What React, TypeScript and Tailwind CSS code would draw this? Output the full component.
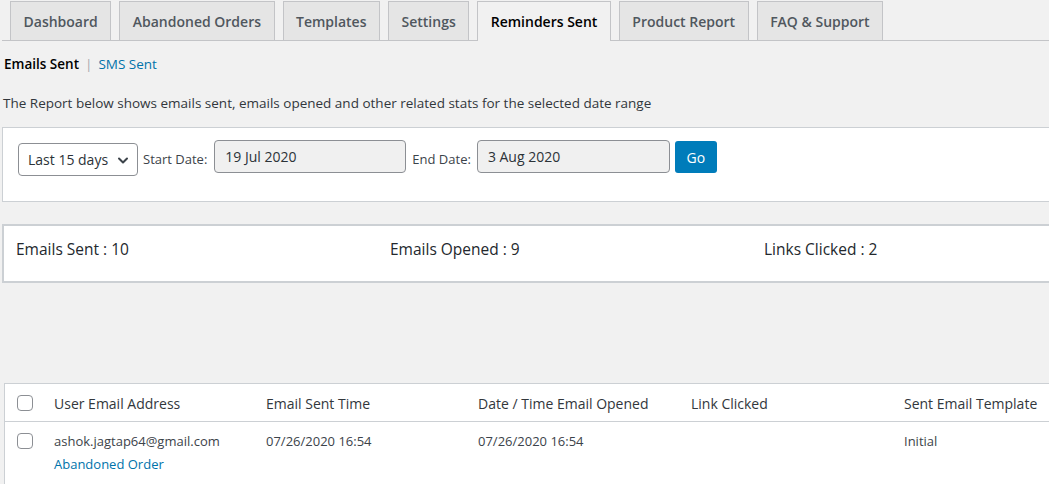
import type { ReactNode } from "react"

const tabs = [
  "Dashboard",
  "Abandoned Orders",
  "Templates",
  "Settings",
  "Reminders Sent",
  "Product Report",
  "FAQ & Support",
]

const columns = [
  "User Email Address",
  "Email Sent Time",
  "Date / Time Email Opened",
  "Link Clicked",
  "Sent Email Template",
]

const Checkbox = () => (
  <span className="block w-4 h-4 rounded-[4px] border border-[#8c8f94] bg-white" />
)

const Cell = ({ children, w }: { children?: ReactNode; w: string }) => (
  <div className={`${w} shrink-0`}>{children}</div>
)

export default function App() {
  return (
    <div
      className="w-[1049px] h-[484px] overflow-hidden bg-[#f1f1f1] text-[#3c434a]"
      style={{ fontFamily: '"Open Sans", "Noto Sans", sans-serif' }}
    >
      <div className="w-[1110px] pl-[2px]">
        {/* Tabs */}
        <nav className="flex items-start gap-[8px] pl-[8px] pt-px border-b border-[#c3c4c7] h-[41px]">
          {tabs.map((t) => {
            const active = t === "Reminders Sent"
            return (
              <div
                key={t}
                className={
                  active
                    ? "h-[40px] px-[12.5px] flex items-center border border-b-0 border-[#c3c4c7] bg-[#f1f1f1] text-[14px] font-semibold text-black"
                    : "h-[39px] px-[12.5px] flex items-center border border-b-0 border-[#c3c4c7] bg-[#e5e5e5] text-[14px] font-semibold text-[#50575e]"
                }
              >
                {t}
              </div>
            )
          })}
        </nav>

        {/* Sub links */}
        <div className="mt-[13px] pl-[2px] h-5 leading-5 text-[13.5px] flex items-center gap-[6px]">
          <span className="font-semibold text-black">Emails Sent</span>
          <span className="text-[#a7aaad]">|</span>
          <span className="text-[#0073aa]">SMS Sent</span>
        </div>

        <p className="mt-[19px] pl-px h-5 leading-5 text-[13.5px] text-[#32373c]">
          The Report below shows emails sent, emails opened and other related stats for the selected date range
        </p>

        {/* Filter box */}
        <div className="mt-[14px] h-[75px] border border-[#ccd0d4] bg-white flex items-start pl-[15px] pt-[12px] text-[13px]">
          <div className="mt-[3px] w-[120px] h-[33px] rounded-[4px] border border-[#8c8f94] bg-white flex items-center justify-between pl-[9px] pr-[8px] text-[14px] text-[#2c3338]">
            <span>Last 15 days</span>
            <svg width="12" height="12" viewBox="0 0 12 12" fill="none" stroke="#3c434a" strokeWidth="2" strokeLinecap="round" strokeLinejoin="round">
              <path d="M2 4.5 L6 8.5 L10 4.5" />
            </svg>
          </div>
          <span className="ml-[5px] h-[33px] flex items-center mt-[3px]">Start Date:</span>
          <div className="ml-[7px] w-[192px] h-[33px] rounded-[4px] border border-[#8c8f94] bg-[#f0f0f0] flex items-center pl-[10px] text-[14px] text-[#2c3338]">
            19 Jul 2020
          </div>
          <span className="ml-[6px] h-[33px] flex items-center mt-[3px]">End Date:</span>
          <div className="ml-[6px] w-[193px] h-[33px] rounded-[4px] border border-[#8c8f94] bg-[#f0f0f0] flex items-center pl-[10px] text-[14px] text-[#2c3338]">
            3 Aug 2020
          </div>
          <div className="ml-[5px] mt-px w-[42px] h-[32px] rounded-[3px] bg-[#007cba] text-white flex items-center justify-center text-[14px]">
            Go
          </div>
        </div>

        {/* Stats */}
        <div className="mt-[22px] h-[59px] border-2 border-[#ccd0d4] bg-white flex items-start pt-[11px] pl-[12px] text-[15.5px] leading-6 text-[#23282d]">
          <div className="w-[374px]">Emails Sent : 10</div>
          <div className="w-[374px]">Emails Opened : 9</div>
          <div className="w-[300px]">Links Clicked : 2</div>
        </div>

        {/* Table */}
        <div className="mt-[100px] ml-[2px] border border-[#ccd0d4] bg-white">
          <div className="h-[38px] flex items-center pt-px border-b border-[#ccd0d4] text-[14px] text-[#32373c]">
            <Cell w="w-[49px] pl-[12px]">
              <Checkbox />
            </Cell>
            <Cell w="w-[212px]">{columns[0]}</Cell>
            <Cell w="w-[212px]">{columns[1]}</Cell>
            <Cell w="w-[213px]">{columns[2]}</Cell>
            <Cell w="w-[213px]">{columns[3]}</Cell>
            <Cell w="w-[200px]">{columns[4]}</Cell>
          </div>
          <div className="flex items-start pt-[9px] pb-[10px] text-[13px]">
            <Cell w="w-[49px] pl-[12px] pt-[2px]">
              <Checkbox />
            </Cell>
            <Cell w="w-[212px]">
              <div className="leading-5">ashok.jagtap64@gmail.com</div>
              <div className="leading-5 mt-[3px] text-[#0073aa]">Abandoned Order</div>
            </Cell>
            <Cell w="w-[212px]">
              <div className="leading-5">07/26/2020 16:54</div>
            </Cell>
            <Cell w="w-[213px]">
              <div className="leading-5">07/26/2020 16:54</div>
            </Cell>
            <Cell w="w-[213px]" />
            <Cell w="w-[200px]">
              <div className="leading-5">Initial</div>
            </Cell>
          </div>
        </div>
      </div>
    </div>
  )
}
